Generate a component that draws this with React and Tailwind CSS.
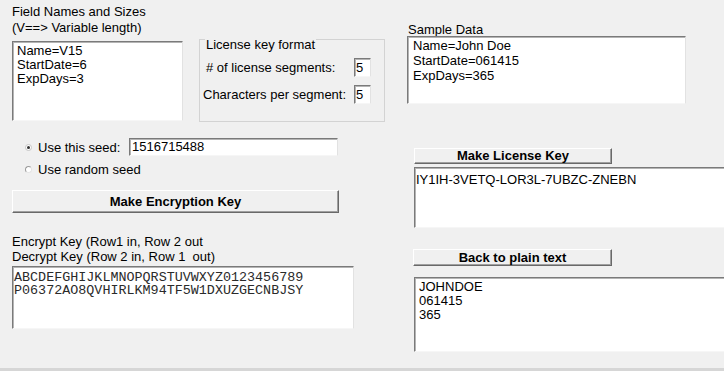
import React from "react";

// sunken edit box, classic Windows look
const sunken =
  "bg-white border border-t-[#7a7a7a] border-l-[#7a7a7a] border-r-[#e2e2e2] border-b-[#f6f6f6] shadow-[inset_1px_1px_0_#b4b4b4]";

// raised push button
const raised =
  "flex items-center justify-center bg-[#f0f0f0] border border-t-white border-l-white border-r-[#696969] border-b-[#696969] shadow-[inset_-1px_-1px_0_#a0a0a0] font-bold";

const Radio = ({ checked }) => (
  <span
    className={`flex h-[7px] w-[7px] shrink-0 items-center justify-center rounded-full border bg-white ${
      checked
        ? "border-[#c4c4c4]"
        : "border-[#e4e4e4] border-t-[#9a9a9a] border-l-[#9a9a9a]"
    }`}
  >
    {checked && <span className="h-[3px] w-[3px] rounded-full bg-[#333]" />}
  </span>
);

const App = () => {
  return (
    <div className="flex h-[371px] w-[724px] overflow-hidden border-b-[3px] border-[#d6d6d6] bg-[#f0f0f0] font-['Liberation_Sans',Arial,sans-serif] text-[13px] text-black">
      {/* ══════════ LEFT COLUMN ══════════ */}
      <div className="flex w-[407px] shrink-0 flex-col pl-[12px]">
        <div className="flex items-start pt-[4px]">
          {/* Field names */}
          <div className="w-[171px] shrink-0">
            <p className="leading-[16px]">Field Names and Sizes</p>
            <p className="leading-[16px]">(V==&gt; Variable length)</p>
            <div className={`${sunken} mt-[5px] h-[80px] pl-[4px] pt-[2px] leading-[14px]`}>
              <div>Name=V15</div>
              <div>StartDate=6</div>
              <div>ExpDays=3</div>
            </div>
          </div>

          {/* License key format group */}
          <div className="relative ml-[16px] mt-[35px] h-[83px] w-[186px] shrink-0 border border-[#d3d3d3] pt-[18px]">
            <span className="absolute -top-[3px] left-[5px] bg-[#f0f0f0] px-[1px] leading-[15px]">
              License key format
            </span>
            <div className="flex h-[19px] items-center">
              <span className="ml-[6px] w-[148px] leading-[15px]"># of license segments:</span>
              <div className={`${sunken} h-[19px] w-[17px] pl-[1px] leading-[17px]`}>5</div>
            </div>
            <div className="mt-[8px] flex h-[19px] items-center">
              <span className="ml-[3px] w-[151px] leading-[15px]">Characters per segment:</span>
              <div className={`${sunken} h-[19px] w-[17px] pl-[1px] leading-[17px]`}>5</div>
            </div>
          </div>
        </div>

        {/* Seed choice */}
        <div className="mt-[16px] flex h-[18px] items-center pl-[13px]">
          <Radio checked />
          <span className="ml-[6px] w-[91px] leading-[15px]">Use this seed:</span>
          <div className={`${sunken} h-[18px] w-[209px] pl-[2px] leading-[16px]`}>1516715488</div>
        </div>
        <div className="mt-[5px] flex h-[16px] items-center pl-[13px]">
          <Radio />
          <span className="ml-[6px] leading-[15px]">Use random seed</span>
        </div>

        <button className={`${raised} mt-[13px] h-[23px] w-[327px]`}>Make Encryption Key</button>

        <div className="mt-[21px] leading-[15px]">
          <p>Encrypt Key (Row1 in, Row 2 out</p>
          <p>Decrypt Key (Row 2 in, Row 1&nbsp; out)</p>
        </div>
        <div
          className={`${sunken} mt-[2px] h-[63px] w-[342px] pl-[1px] pt-[4px] font-['Liberation_Mono','Courier_New',monospace] text-[13.4px] leading-[13px] text-[#2a2a2a]`}
        >
          <div>ABCDEFGHIJKLMNOPQRSTUVWXYZ0123456789</div>
          <div>P06372AO8QVHIRLKM94TF5W1DXUZGECNBJSY</div>
        </div>
      </div>

      {/* ══════════ RIGHT COLUMN ══════════ */}
      <div className="flex min-w-0 flex-1 flex-col">
        <p className="pl-[1px] pt-[23px] leading-[14px]">Sample Data</p>
        <div className={`${sunken} -mt-[1px] h-[68px] w-[279px] shrink-0 pl-[5px] pt-[1px] leading-[15px]`}>
          <div>Name=John Doe</div>
          <div>StartDate=061415</div>
          <div>ExpDays=365</div>
        </div>

        <button className={`${raised} ml-[7px] mt-[44px] h-[16px] w-[198px] shrink-0 leading-[14px]`}>
          Make License Key
        </button>
        <div className={`${sunken} ml-[7px] mt-[3px] h-[61px] w-[330px] shrink-0 pl-[1px] pt-[4px] leading-[15px]`}>
          IY1IH-3VETQ-LOR3L-7UBZC-ZNEBN
        </div>

        <button className={`${raised} ml-[6px] mt-[21px] h-[17px] w-[199px] shrink-0 leading-[15px]`}>
          Back to plain text
        </button>
        <div className={`${sunken} ml-[7px] mt-[11px] h-[75px] w-[330px] shrink-0 pl-[4px] pt-[2px] leading-[14px]`}>
          <div>JOHNDOE</div>
          <div>061415</div>
          <div>365</div>
        </div>
      </div>
    </div>
  );
};

export default App;
